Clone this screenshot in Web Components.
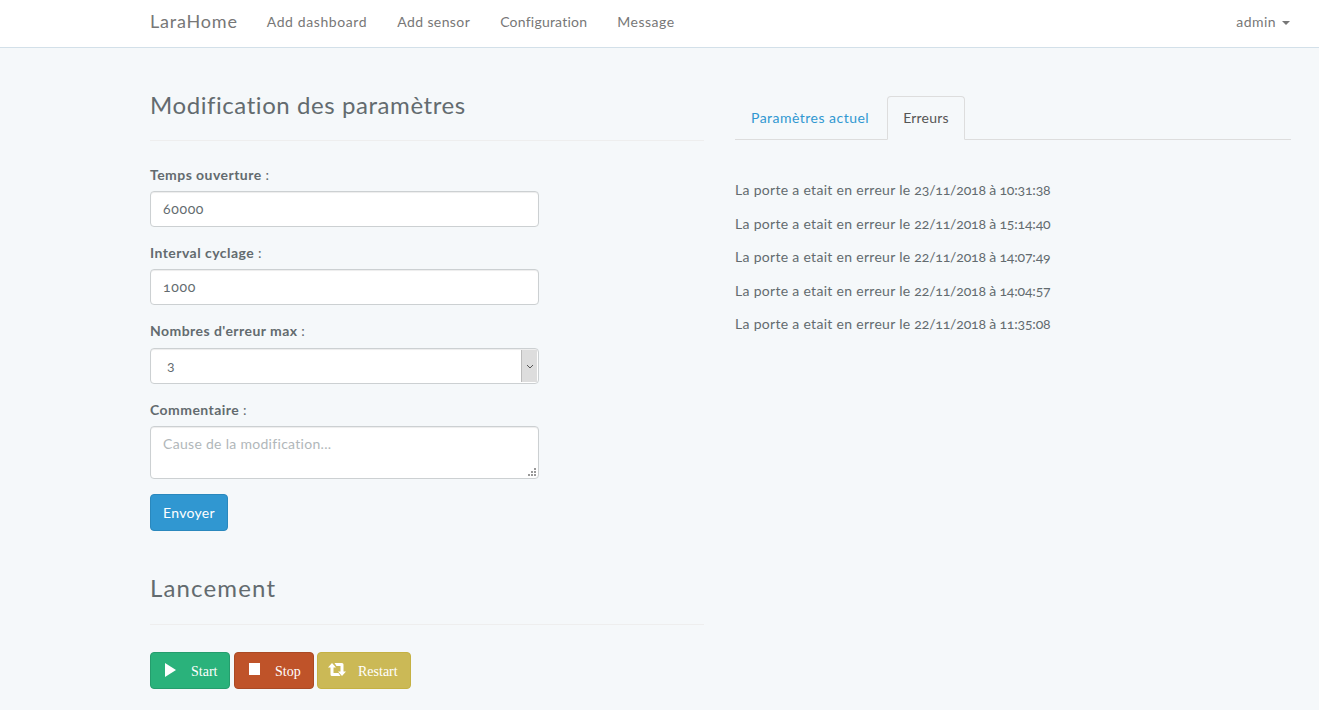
<!DOCTYPE html>
<html>
<head>
<meta charset="utf-8">
<title>LaraHome</title>
<style>
  html, body { margin: 0; padding: 0; }
  body { background: #f5f8fa; font-family: Lato, "Liberation Sans", sans-serif; font-size: 14px; color: #636b6f; }
</style>
</head>
<body>
<lh-navbar></lh-navbar>
<lh-page>
  <div slot="left">
    <lh-titre>Modification des paramètres</lh-titre>
    <lh-formulaire></lh-formulaire>
    <lh-titre class="second">Lancement</lh-titre>
    <lh-actions></lh-actions>
  </div>
  <lh-erreurs slot="right"></lh-erreurs>
</lh-page>

<script>
const FONT = 'Lato, "Liberation Sans", sans-serif';

// Barre de navigation
class LhNavbar extends HTMLElement {
  connectedCallback() {
    const liens = [['Add dashboard', .6], ['Add sensor', .4], ['Configuration', .22], ['Message', .5]];
    this.attachShadow({ mode: 'open' }).innerHTML = `
      <style>
        :host { display: flex; align-items: center; height: 42px; background: #fff; border-bottom: 1px solid #d3e0e9; padding: 0 29px 5px 150px; font-family: ${FONT}; color: #777; }
        .marque { font-size: 18px; margin-right: 29px; letter-spacing: .8px; }
        nav { display: flex; gap: 30px; flex: 1; font-size: 14px; }
        .admin { letter-spacing: .45px; }
        .caret { display: inline-block; border-top: 4px solid; border-left: 4px solid transparent; border-right: 4px solid transparent; margin-left: 2px; vertical-align: middle; }
      </style>
      <span class="marque">LaraHome</span>
      <nav>${liens.map(([t, e]) => `<span style="letter-spacing:${e}px">${t}</span>`).join('')}</nav>
      <span class="admin">admin <i class="caret"></i></span>`;
  }
}

// Grille à deux colonnes
class LhPage extends HTMLElement {
  connectedCallback() {
    this.attachShadow({ mode: 'open' }).innerHTML = `
      <style>
        :host { display: grid; grid-template-columns: 554px 556px; column-gap: 31px; padding: 0 28px 0 150px; font-family: ${FONT}; letter-spacing: .3px; }
      </style>
      <slot name="left"></slot>
      <slot name="right"></slot>`;
  }
}

class LhTitre extends HTMLElement {
  connectedCallback() {
    this.attachShadow({ mode: 'open' }).innerHTML = `
      <style>
        :host { display: block; margin-top: 40px; padding-bottom: 19px; border-bottom: 1px solid #eee; font-size: 24px; line-height: 33px; color: #636b6f; letter-spacing: .57px; }
        :host(.second) { margin-top: 40px; padding-bottom: 20px; letter-spacing: 1.15px; }
      </style>
      <slot></slot>`;
  }
}

// Formulaire de modification
class LhFormulaire extends HTMLElement {
  connectedCallback() {
    this.attachShadow({ mode: 'open' }).innerHTML = `
      <style>
        :host { display: flex; flex-direction: column; width: 389px; padding-top: 24px; font-size: 14px; }
        label { font-weight: 700; line-height: 20px; margin-bottom: 6px; letter-spacing: .45px; }
        label span { font-weight: 400; }
        .champ { box-sizing: border-box; height: 36px; background: #fff; border: 1px solid #ccd0d2; border-radius: 4px; padding: 0 12px; line-height: 34px; margin-bottom: 16px; box-shadow: inset 0 1px 1px rgba(0,0,0,.075); }
        .nombre { font-variant-numeric: oldstyle-nums; letter-spacing: .65px; }
        .select { display: flex; padding: 0 0 0 16px; margin-top: 1px; }
        .select b { flex: 1; font-weight: 400; }
        .fleche { width: 15px; margin: 1px; background: #ddd; border-left: 1px solid #bbb; display: flex; align-items: center; justify-content: center; }
        .zone { position: relative; height: 53px; color: #b1b7ba; margin-bottom: 15px; }
        .poignee { position: absolute; right: 2px; bottom: 2px; }
        button { align-self: flex-start; height: 37px; padding: 0 12px; font: inherit; letter-spacing: inherit; color: #fff; background: #3097d1; border: 1px solid #2a88bd; border-radius: 4px; }
      </style>
      <label>Temps ouverture <span>:</span></label>
      <div class="champ nombre">60000</div>
      <label>Interval cyclage <span>:</span></label>
      <div class="champ nombre">1000</div>
      <label>Nombres d'erreur max <span>:</span></label>
      <div class="champ select nombre"><b>3</b><span class="fleche"><svg width="8" height="5" viewBox="0 0 8 5"><path d="M1 1l3 3 3-3" fill="none" stroke="#555"/></svg></span></div>
      <label>Commentaire <span>:</span></label>
      <div class="champ zone">Cause de la modification...
        <svg class="poignee" width="9" height="9" viewBox="0 0 9 9"><g fill="#999"><rect x="7" y="1" width="2" height="2"/><rect x="4" y="4" width="2" height="2"/><rect x="7" y="4" width="2" height="2"/><rect x="1" y="7" width="2" height="2"/><rect x="4" y="7" width="2" height="2"/><rect x="7" y="7" width="2" height="2"/></g></svg></div>
      <button>Envoyer</button>`;
  }
}

// Boutons de lancement
class LhActions extends HTMLElement {
  connectedCallback() {
    const icones = {
      play: '<path d="M0 0l11 7L0 14z" fill="#fff"/>',
      stop: '<rect x="0" y="0" width="11" height="12" fill="#fff"/>',
      retweet: '<path d="M4 0l4 4.500H5.500V10H10.500L12.500 13H4Q2.500 13 2.500 11.500V4.500H0zM14 13l-4-4.500H12.500V3H8.500L6.500 0H14Q15.500 0 15.500 1.500V8.500H18z" fill="#fff"/>'
    };
    const bouton = (couleur, bord, icone, texte, largeur, marge, espace) => `
      <button style="background:${couleur};border-color:${bord};width:${largeur}px;padding-left:${marge}px">
        <svg width="18" height="14" viewBox="0 0 18 14">${icones[icone]}</svg><span style="margin-left:${espace}px">${texte}</span>
      </button>`;
    this.attachShadow({ mode: 'open' }).innerHTML = `
      <style>
        :host { display: flex; margin-top: 27px; }
        button { display: flex; align-items: center; box-sizing: border-box; height: 37px; padding: 0; margin-right: 4px; color: #fff; border: 1px solid; border-radius: 4px; font: 14px "Liberation Serif", serif; }
        button:nth-of-type(2) { margin-right: 3px; }
        svg { margin-top: -1px; flex: none; }
        span { padding-top: 3px; }
      </style>
      ${bouton('#2ab27b', '#259d6d', 'play', 'Start', 80, 14, 8)}
      ${bouton('#bf5329', '#aa4a24', 'stop', 'Stop', 80, 14, 8)}
      ${bouton('#cbb956', '#c5b143', 'retweet', 'Restart', 94, 10, 12)}`;
  }
}

// Onglets et liste des erreurs
class LhErreurs extends HTMLElement {
  connectedCallback() {
    const lignes = ['23/11/2018 à 10:31:38', '22/11/2018 à 15:14:40', '22/11/2018 à 14:07:49', '22/11/2018 à 14:04:57', '22/11/2018 à 11:35:08'];
    this.attachShadow({ mode: 'open' }).innerHTML = `
      <style>
        :host { display: block; padding-top: 48px; }
        ul { display: flex; margin: 0; padding: 0; list-style: none; border-bottom: 1px solid #ddd; height: 43px; letter-spacing: .48px; }
        li { box-sizing: border-box; height: 44px; padding: 0 15px; line-height: 42px; margin-right: 2px; color: #3097d1; border: 1px solid transparent; border-radius: 4px 4px 0 0; }
        li.actif { color: #555; background: #f5f8fa; border-color: #ddd #ddd transparent; letter-spacing: .2px; }
        .liste { padding-top: 40px; }
        p { margin: 0; line-height: 20px; padding-bottom: 13.5px; }
        p span { font-variant-numeric: oldstyle-nums; letter-spacing: -.17px; }
      </style>
      <ul><li>Paramètres actuel</li><li class="actif">Erreurs</li></ul>
      <div class="liste">${lignes.map(l => `<p>La porte a etait en erreur le <span>${l}</span></p>`).join('')}</div>`;
  }
}

customElements.define('lh-navbar', LhNavbar);
customElements.define('lh-page', LhPage);
customElements.define('lh-titre', LhTitre);
customElements.define('lh-formulaire', LhFormulaire);
customElements.define('lh-actions', LhActions);
customElements.define('lh-erreurs', LhErreurs);
</script>
</body>
</html>
